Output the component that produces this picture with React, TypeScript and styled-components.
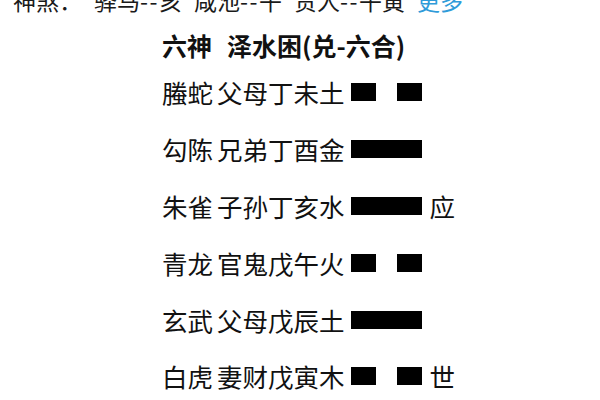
import React from "react";
import styled, { createGlobalStyle } from "styled-components";

const Global = createGlobalStyle`
  html, body { margin: 0; padding: 0; background: #ffffff; }
  body { font-family: "Noto Sans CJK SC", "Noto Sans", sans-serif; color: #111; overflow: hidden; }
`;

const Page = styled.div`
  width: 600px;
  height: 400px;
  overflow: hidden;
  display: flex;
  flex-direction: column;
`;

const Header = styled.div`
  margin-top: -15px;
  height: 38px;
  display: flex;
  align-items: flex-start;
  padding-left: 13px;
  font-size: 23px;
  line-height: 30px;
  color: #1a1a1a;
  white-space: nowrap;
  gap: 12px;
`;

const Group = styled.span``;

const Dash = styled.span`
  letter-spacing: 1.5px;
`;

const More = styled.span`
  color: #2f9bd9;
`;

const Divider = styled.div`
  margin: 0 3px;
  height: 1px;
  background: #e3e3e3;
  box-shadow: 0 1px 2px rgba(0, 0, 0, 0.08);
`;

const Block = styled.div`
  padding-left: 162px;
  margin-top: 15px;
  display: flex;
  flex-direction: column;
  align-items: flex-start;
`;

const Title = styled.div`
  display: flex;
  font-size: 25px;
  font-weight: 700;
  line-height: 30px;
  white-space: pre;
  margin-bottom: 4px;
`;

const TitleMain = styled.span`
  margin-left: 15px;
`;

const Row = styled.div`
  display: flex;
  align-items: center;
  height: 56.8px;
  font-size: 25.5px;
  white-space: pre;
`;

const God = styled.span`
  line-height: 30px;
  margin-right: 4px;
`;

const Label = styled.span`
  line-height: 30px;
`;

const Bar = styled.div<{ $yin: boolean }>`
  flex-shrink: 0;
  margin-left: 6px;
  width: 71px;
  height: 18px;
  display: flex;
  justify-content: space-between;
  background: ${(p) => (p.$yin ? "transparent" : "#000")};
`;

const Seg = styled.div`
  width: 25px;
  height: 100%;
  background: #000;
`;

const Mark = styled.span`
  margin-left: 8px;
  line-height: 30px;
`;

const shensha = [
  { name: "驿马", value: "亥" },
  { name: "咸池", value: "午" },
  { name: "贵人", value: "午寅" },
];

const rows = [
  { god: "螣蛇", rel: "父母丁未土", yin: true, mark: "" },
  { god: "勾陈", rel: "兄弟丁酉金", yin: false, mark: "" },
  { god: "朱雀", rel: "子孙丁亥水", yin: false, mark: "应" },
  { god: "青龙", rel: "官鬼戊午火", yin: true, mark: "" },
  { god: "玄武", rel: "父母戊辰土", yin: false, mark: "" },
  { god: "白虎", rel: "妻财戊寅木", yin: true, mark: "世" },
];

export default function App() {
  return (
    <Page>
      <Global />
      <Header>
        <Group>神煞：</Group>
        {shensha.map((s) => (
          <Group key={s.name}>
            {s.name}
            <Dash>--</Dash>
            {s.value}
          </Group>
        ))}
        <More>更多</More>
      </Header>
      <Divider />
      <Block>
        <Title>
          <span>六神</span>
          <TitleMain>泽水困(兑-六合)</TitleMain>
        </Title>
        {rows.map((r) => (
          <Row key={r.god}>
            <God>{r.god}</God>
            <Label>{r.rel}</Label>
            <Bar $yin={r.yin}>
              {r.yin && (
                <>
                  <Seg />
                  <Seg />
                </>
              )}
            </Bar>
            {r.mark && <Mark>{r.mark}</Mark>}
          </Row>
        ))}
      </Block>
    </Page>
  );
}
